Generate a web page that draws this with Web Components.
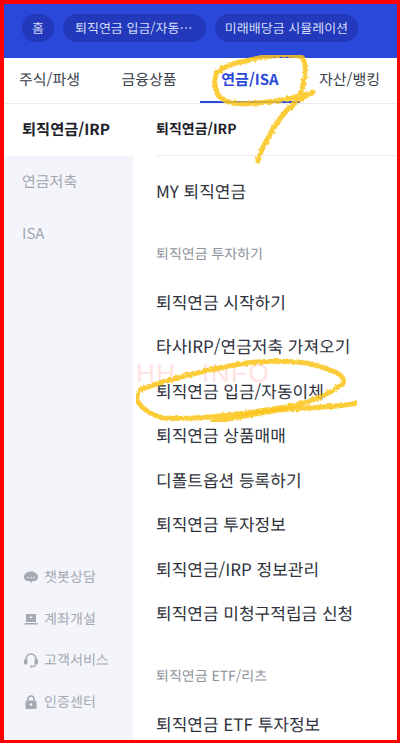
<!DOCTYPE html>
<html lang="ko">
<head>
<meta charset="utf-8">
<style>
  html, body { margin: 0; padding: 0; }
  body { font-family: "Noto Sans CJK KR", "Noto Sans", sans-serif; text-rendering: geometricPrecision; }
</style>
</head>
<body>
<menu-page></menu-page>

<script>
class TopChips extends HTMLElement {
  constructor() {
    super();
    this.attachShadow({ mode: 'open' });
    this.shadowRoot.innerHTML = `
      <style>
        :host { display: flex; gap: 9px; height: 54px; box-sizing: border-box; padding: 10px 0 0 18px; background: #2a48da; }
        span { height: 28px; line-height: 27px; padding: 0 10px; border-radius: 14px; background: #2239bb; color: #d5dcf8; font-size: 13px; white-space: nowrap; box-sizing: border-box; }
        .w { width: 143px; padding: 0 12px; overflow: hidden; text-overflow: ellipsis; }
        .n { padding: 0 8px; text-align: center; }
      </style>
      <span>홈</span>
      <span class="w">퇴직연금 입금/자동이체</span>
      <span class="w n">미래배당금 시뮬레이션</span>
    `;
  }
}

class MainTabs extends HTMLElement {
  constructor() {
    super();
    this.attachShadow({ mode: 'open' });
    this.shadowRoot.innerHTML = `
      <style>
        :host { display: grid; grid-template-columns: 98px 98px 100px 1fr; height: 45px; margin-top: 1px; box-sizing: border-box; border-bottom: 1px solid #ececf0; }
        a { display: block; text-align: center; font-size: 15px; line-height: 41px; color: #3a3f4a; white-space: nowrap; height: 44px; box-sizing: border-box; }
        .first { text-align: left; padding-left: 15px; }
        .second { padding-right: 4px; }
        .on { color: #2a48da; font-weight: 700; border-bottom: 2px solid #2a48da; }
        .last { text-align: left; padding-left: 19px; }
      </style>
      <a class="first">주식/파생</a><a class="second">금융상품</a><a class="on">연금/ISA</a><a class="last">자산/뱅킹</a>
    `;
  }
}

class SideNav extends HTMLElement {
  constructor() {
    super();
    this.attachShadow({ mode: 'open' });
    this.shadowRoot.innerHTML = `
      <style>
        :host { display: flex; flex-direction: column; width: 129px; flex: none; background: #f3f5fa; }
        .cur { height: 52px; background: #fff; font-size: 15.3px; font-weight: 700; line-height: 50px; padding-left: 18px; color: #1d2028; }
        .item { height: 52px; line-height: 52px; padding-left: 18px; font-size: 15px; color: #a3a7b1; }
        .tools { margin-top: auto; padding: 0 0 29px 19px; display: flex; flex-direction: column; gap: 20.5px; }
        .tool { display: flex; align-items: center; gap: 5px; height: 21px; font-size: 14.100px; color: #a6a9b2; }
        svg { width: 16px; height: 16px; flex: none; fill: #a6a9b2; }
      </style>
      <div class="cur">퇴직연금/IRP</div>
      <div class="item">연금저축</div>
      <div class="item">ISA</div>
      <div class="tools">
        <div class="tool">
          <svg viewBox="0 0 16 16"><path d="M8 2.500c4 0 7 2.400 7 5.500 0 2-1.100 3.300-2.700 3.900H10l-2 1.800-1.600-1.800H3.500C2 11.300 1 9.800 1 8c0-3.100 3-5.500 7-5.500z"/><circle cx="5" cy="8.500" r=".8" fill="#f3f5fa"/><circle cx="8" cy="8.500" r=".8" fill="#f3f5fa"/><circle cx="11" cy="8.500" r=".8" fill="#f3f5fa"/></svg>
          <span>챗봇상담</span>
        </div>
        <div class="tool">
          <svg viewBox="0 0 16 16"><path d="M3 3h10v8H3z"/><path d="M1.500 12h13v1.500h-13z"/><path d="M6 5.500h4L8 7.500z" fill="#f3f5fa"/></svg>
          <span>계좌개설</span>
        </div>
        <div class="tool">
          <svg viewBox="0 0 16 16"><path d="M3 8.500V7a5 5 0 0 1 10 0v1.500" fill="none" stroke="#a6a9b2" stroke-width="1.500"/><rect x="1" y="7" width="3.500" height="5.500" rx="1.500"/><rect x="11.500" y="7" width="3.500" height="5.500" rx="1.500"/><path d="M12.500 12.500c0 1.500-1.500 2-3 2" fill="none" stroke="#a6a9b2" stroke-width="1.200"/><circle cx="8.500" cy="14.500" r="1.200"/></svg>
          <span>고객서비스</span>
        </div>
        <div class="tool">
          <svg viewBox="0 0 16 16"><path d="M5 7V5a3 3 0 0 1 6 0v2" fill="none" stroke="#a6a9b2" stroke-width="1.600"/><rect x="2.500" y="6.500" width="11" height="8.500" rx="1.200"/><circle cx="8" cy="10.500" r="1.300" fill="#f3f5fa"/></svg>
          <span>인증센터</span>
        </div>
      </div>
    `;
  }
}

class MenuList extends HTMLElement {
  constructor() {
    super();
    this.attachShadow({ mode: 'open' });
    const rows = [
      ['item', 'MY 퇴직연금'],
      ['sec', '퇴직연금 투자하기'],
      ['item', '퇴직연금 시작하기'],
      ['item', '타사IRP/연금저축 가져오기'],
      ['item', '퇴직연금 입금/자동이체'],
      ['item', '퇴직연금 상품매매'],
      ['item', '디폴트옵션 등록하기'],
      ['item', '퇴직연금 투자정보'],
      ['item', '퇴직연금/IRP 정보관리'],
      ['item', '퇴직연금 미청구적립금 신청'],
      ['sec', '퇴직연금 ETF/리츠'],
      ['item', '퇴직연금 ETF 투자정보']
    ];
    this.shadowRoot.innerHTML = `
      <style>
        :host { display: block; flex: 1; min-width: 0; overflow: hidden; padding-left: 23px; background: #fff; }
        h2 { margin: 0; height: 52px; line-height: 50px; font-size: 14px; font-weight: 700; color: #1d2028; border-bottom: 1px solid #ececf0; box-sizing: border-box; }
        .item { height: 44.5px; line-height: 44px; font-size: 17px; color: #2f333d; white-space: nowrap; }
        .sec { height: 44px; margin-top: 22px; line-height: 36px; font-size: 14px; color: #8e929c; white-space: nowrap; }
        .first { margin-top: 13px; }
      </style>
      <h2>퇴직연금/IRP</h2>
      ${rows.map((r, i) => `<div class="${r[0]}${i === 0 ? ' first' : ''}">${r[1]}</div>`).join('')}
    `;
  }
}

class MenuPage extends HTMLElement {
  constructor() {
    super();
    this.attachShadow({ mode: 'open' });
    this.shadowRoot.innerHTML = `
      <style>
        :host { display: block; position: relative; width: 400px; height: 743px; box-sizing: border-box; border: 4px solid #f00; border-bottom-width: 3px; border-right-width: 3px; overflow: hidden; background: #fff; }
        .body { display: flex; height: 637px; }
        .mark { position: absolute; left: 132px; top: 359px; font: 26px/20px "Liberation Sans", sans-serif; letter-spacing: 1.5px; word-spacing: 4px; color: #ffe3e3; white-space: pre; }
        svg { position: absolute; left: -4px; top: -4px; width: 400px; height: 743px; pointer-events: none; }
        path { fill: none; stroke: #fcc419; stroke-width: 5; stroke-linecap: round; stroke-linejoin: round; opacity: .85; }
      </style>
      <top-chips></top-chips>
      <main-tabs></main-tabs>
      <div class="body">
        <side-nav></side-nav>
        <menu-list></menu-list>
      </div>
      <div class="mark">HH  INFO</div>
      <svg viewBox="0 0 400 743">
        <filter id="rough" x="0" y="0" width="100%" height="100%"><feTurbulence type="fractalNoise" baseFrequency=".35" numOctaves="2" seed="4"/><feDisplacementMap in="SourceGraphic" scale="3.500"/></filter>
        <g filter="url(#rough)">
          <path d="M258 161C261 150 263 146 267 140C273 128 280 118 287 110C293 103 303 97 313 92C300 97 285 100 267 102C250 104 240 104 233 103C224 101 219 98 217 93C214 85 214 78 217 72C225 66 238 62 250 60C263 57 277 55 287 55C294 55 299 55 302 57C306 64 306 70 305 77C304 84 302 90 300 95"/>
          <path d="M297 362C280 361 262 361 247 363C228 366 212 369 197 373C176 378 156 383 140 390C136 395 136 398 138 402C143 410 152 415 163 418C185 419 208 418 230 415C254 412 276 409 297 405C315 400 332 393 343 383C345 377 339 373 330 370C320 366 308 363 297 362"/>
          <path d="M213 422C235 418 258 413 280 410C305 407 335 408 357 403"/>
        </g>
      </svg>
    `;
  }
}

customElements.define('top-chips', TopChips);
customElements.define('main-tabs', MainTabs);
customElements.define('side-nav', SideNav);
customElements.define('menu-list', MenuList);
customElements.define('menu-page', MenuPage);
</script>
</body>
</html>
